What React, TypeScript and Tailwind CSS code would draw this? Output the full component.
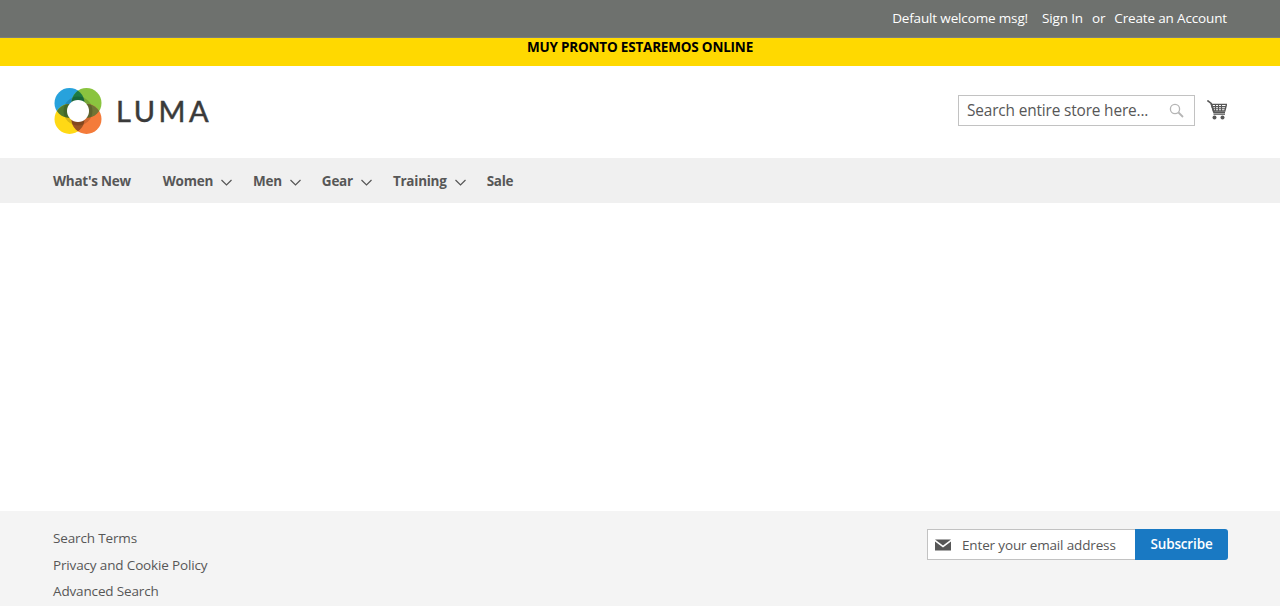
const navItems = [
  { label: "What's New", arrow: false, className: "mr-8" },
  { label: "Women", arrow: true, className: "mr-[21px]" },
  { label: "Men", arrow: true, className: "mr-[21px]" },
  { label: "Gear", arrow: true, className: "mr-[21px]" },
  { label: "Training", arrow: true, className: "mr-[21px]" },
  { label: "Sale", arrow: false, className: "" },
];

const Chevron = () => (
  <svg width="11" height="7" viewBox="0 0 11 7" className="ml-[8px] mt-[2px]" fill="none">
    <path d="M0.5 1l5 5 5-5" stroke="#555" strokeWidth="1.2" />
  </svg>
);

const Logo = () => (
  <div className="flex items-center">
    <svg width="48" height="46" viewBox="0 0 48 46">
      <defs>
        <clipPath id="logo-blue"><circle cx="15.5" cy="15" r="15" /></clipPath>
        <clipPath id="logo-green"><circle cx="32.5" cy="15" r="15" /></clipPath>
        <clipPath id="logo-yellow"><circle cx="15.5" cy="31" r="15" /></clipPath>
      </defs>
      <circle cx="15.5" cy="15" r="15" fill="#27a2dc" />
      <circle cx="32.5" cy="15" r="15" fill="#8ac43f" />
      <circle cx="15.5" cy="31" r="15" fill="#ffd915" />
      <circle cx="32.5" cy="31" r="15" fill="#f47b3a" />
      {/* overlaps between neighbouring petals */}
      <circle cx="32.5" cy="15" r="15" fill="#1d7a43" clipPath="url(#logo-blue)" />
      <circle cx="15.5" cy="31" r="15" fill="#4f7a2f" clipPath="url(#logo-blue)" />
      <circle cx="32.5" cy="31" r="15" fill="#6f7535" clipPath="url(#logo-green)" />
      <circle cx="32.5" cy="31" r="15" fill="#9a5424" clipPath="url(#logo-yellow)" />
      <circle cx="24" cy="23" r="14.5" fill="#000" opacity="0.15" />
      <circle cx="24" cy="23" r="11" fill="#fff" />
    </svg>
    <span className="ml-[14px] mb-[1px] text-[29px] leading-none tracking-[3.5px] font-normal text-[#3a3a3a] [-webkit-text-stroke:0.5px_#3a3a3a] font-['Lato',sans-serif]">
      LUMA
    </span>
  </div>
);

export default function App() {
  return (
    <div className="min-h-[606px] flex flex-col bg-white text-[#333] font-['Open_Sans',sans-serif] text-[13.5px] tracking-[-0.15px] overflow-hidden">
      <div className="h-[38px] bg-[#6e716e] border-b border-[#7a7d80] flex items-center justify-end pr-[53px] text-white pb-[1px]">
        <span>Default welcome msg!</span>
        <a className="ml-[14px]">Sign In</a>
        <span className="ml-[9px]">or</span>
        <a className="ml-[9px]">Create an Account</a>
      </div>
      <div className="h-[28px] bg-[#ffd900] text-black font-bold text-center leading-[18px] tracking-[-0.2px]">
        MUY PRONTO ESTAREMOS ONLINE
      </div>

      <header className="h-[92px] flex items-center justify-between pl-[54px] pr-[53px] pb-[3px]">
        <Logo />
        <div className="flex items-center">
          <div className="w-[237px] h-[31px] border border-[#c2c2c2] flex items-center justify-between pl-2 pr-[10px] text-[15.4px] tracking-[-0.15px] text-[#575757] bg-white">
            <span className="pt-[1px]">Search entire store here...</span>
            <svg width="15" height="15" viewBox="0 0 15 15" fill="none" stroke="#b5b5b5">
              <circle cx="6" cy="6" r="4.6" strokeWidth="1.3" />
              <path d="M9.5 9.5l4.5 4.5" strokeWidth="1.8" />
            </svg>
          </div>
          <svg width="20" height="20" viewBox="0 0 20 20" className="ml-[12px] mb-[2px]" fill="none" stroke="#575757">
            <path d="M0.3 0.5L4.2 3.4 7 12.5H18" strokeWidth="1.7" />
            <path d="M4.5 4.4H19.5L17.8 11H6.5z" strokeWidth="1.4" />
            <path d="M8.5 4.5V11M11.5 4.5V11M14.5 4.5V11M5.5 6.6H19M6 8.8H18.5" strokeWidth="1.1" />
            <path d="M6.5 14.2H18" strokeWidth="1.2" />
            <circle cx="7.5" cy="17.6" r="2" fill="#575757" stroke="none" />
            <circle cx="15.5" cy="17.6" r="2" fill="#575757" stroke="none" />
          </svg>
        </div>
      </header>

      <nav className="h-[45px] bg-[#f0f0f0] flex items-center pl-[53px] pt-[1px] font-bold tracking-[-0.25px] text-[#575757]">
        {navItems.map((item) => (
          <div key={item.label} className={`flex items-center ${item.className}`}>
            <span>{item.label}</span>
            {item.arrow && <Chevron />}
          </div>
        ))}
      </nav>

      <main className="h-[308px]" />

      <footer className="h-[95px] bg-[#f4f4f4] flex justify-between pl-[53px] pr-[52px] pt-[18px]">
        <ul className="flex flex-col gap-[7px] leading-[19.6px] text-[#575757]">
          <li>Search Terms</li>
          <li>Privacy and Cookie Policy</li>
          <li>Advanced Search</li>
        </ul>
        <div className="flex h-[31px]">
          <div className="w-[208px] border border-[#c2c2c2] border-r-0 bg-white flex items-center pl-[7px] text-[#575757]">
            <svg width="16" height="12" viewBox="0 0 16 12" fill="#575757">
              <path d="M0 0.5h16L8 6.5z" />
              <path d="M0 2.5v9h16v-9L8 8.5z" />
            </svg>
            <span className="ml-[11px] pt-[1px]">Enter your email address</span>
          </div>
          <button className="w-[93px] bg-[#1979c3] text-white font-semibold rounded-r-[3px]">Subscribe</button>
        </div>
      </footer>
    </div>
  );
}
